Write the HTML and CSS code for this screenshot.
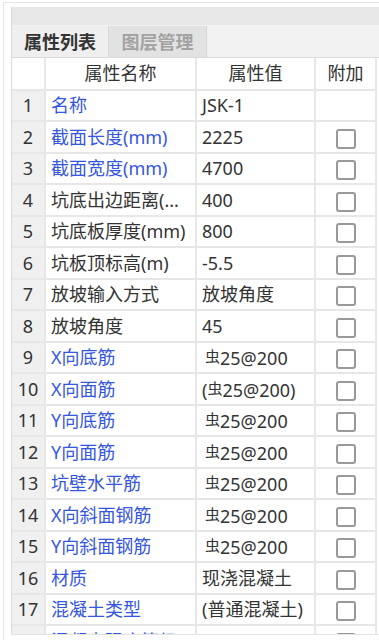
FILE: index.html
```html
<!DOCTYPE html>
<html lang="zh-CN">
<head>
    <meta charset="UTF-8">
    <meta name="viewport" content="width=device-width, initial-scale=1.0">
    <title>属性列表</title>
    <link rel="stylesheet" href="styles.css">
</head>
<body>
    <div class="window">
        <div class="panel">
            <div class="titlebar"></div>
            <div class="tabs">
                <div class="tab active">属性列表</div>
                <div class="tab">图层管理</div>
            </div>
            <table class="props">
                <colgroup>
                    <col class="c-num">
                    <col class="c-name">
                    <col class="c-val">
                    <col class="c-ext">
                </colgroup>
                <thead>
                    <tr><th></th><th>属性名称</th><th>属性值</th><th>附加</th></tr>
                </thead>
                <tbody>
                    <tr><td class="num">1</td><td class="name link">名称</td><td class="val">JSK-1</td><td class="ext"></td></tr>
                    <tr><td class="num">2</td><td class="name link">截面长度(mm)</td><td class="val">2225</td><td class="ext"><span class="cb"></span></td></tr>
                    <tr><td class="num">3</td><td class="name link">截面宽度(mm)</td><td class="val">4700</td><td class="ext"><span class="cb"></span></td></tr>
                    <tr><td class="num">4</td><td class="name">坑底出边距离(...</td><td class="val">400</td><td class="ext"><span class="cb"></span></td></tr>
                    <tr><td class="num">5</td><td class="name">坑底板厚度(mm)</td><td class="val">800</td><td class="ext"><span class="cb"></span></td></tr>
                    <tr><td class="num">6</td><td class="name">坑板顶标高(m)</td><td class="val">-5.5</td><td class="ext"><span class="cb"></span></td></tr>
                    <tr><td class="num">7</td><td class="name">放坡输入方式</td><td class="val">放坡角度</td><td class="ext"><span class="cb"></span></td></tr>
                    <tr><td class="num">8</td><td class="name">放坡角度</td><td class="val">45</td><td class="ext"><span class="cb"></span></td></tr>
                    <tr><td class="num">9</td><td class="name link">X向底筋</td><td class="val"><span class="bar pad">虫</span>25@200</td><td class="ext"><span class="cb"></span></td></tr>
                    <tr><td class="num">10</td><td class="name link">X向面筋</td><td class="val">(<span class="bar">虫</span>25@200)</td><td class="ext"><span class="cb"></span></td></tr>
                    <tr><td class="num">11</td><td class="name link">Y向底筋</td><td class="val"><span class="bar pad">虫</span>25@200</td><td class="ext"><span class="cb"></span></td></tr>
                    <tr><td class="num">12</td><td class="name link">Y向面筋</td><td class="val"><span class="bar pad">虫</span>25@200</td><td class="ext"><span class="cb"></span></td></tr>
                    <tr><td class="num">13</td><td class="name link">坑壁水平筋</td><td class="val"><span class="bar pad">虫</span>25@200</td><td class="ext"><span class="cb"></span></td></tr>
                    <tr><td class="num">14</td><td class="name link">X向斜面钢筋</td><td class="val"><span class="bar pad">虫</span>25@200</td><td class="ext"><span class="cb"></span></td></tr>
                    <tr><td class="num">15</td><td class="name link">Y向斜面钢筋</td><td class="val"><span class="bar pad">虫</span>25@200</td><td class="ext"><span class="cb"></span></td></tr>
                    <tr><td class="num">16</td><td class="name link">材质</td><td class="val">现浇混凝土</td><td class="ext"><span class="cb"></span></td></tr>
                    <tr><td class="num">17</td><td class="name link">混凝土类型</td><td class="val">(普通混凝土)</td><td class="ext"><span class="cb"></span></td></tr>
                    <tr><td class="num">18</td><td class="name link">混凝土强度等级</td><td class="val"></td><td class="ext"><span class="cb"></span></td></tr>
                </tbody>
            </table>
        </div>
    </div>
</body>
</html>
```

FILE: styles.css
```css
body {
    margin: 0;
    background-color: #fff;
    font-family: "Noto Sans", "Noto Sans CJK SC", sans-serif;
    font-size: 18px;
    color: #333;
}
.window {
    margin: 2px 0 0 3px;
    padding: 4px 0 0 7px;
    border-top: 1px solid #e4e4e4;
    border-left: 1px solid #e4e4e4;
    height: 638px;
    box-sizing: border-box;
}
.panel {
    height: 628px;
    overflow: hidden;
    border-left: 1px solid #dcdcdc;
    border-bottom: 1px solid #e4e4e4;
    box-sizing: border-box;
}
.titlebar {
    height: 18px;
    background-color: #e7e7e7;
}
.tabs {
    display: flex;
    height: 33px;
    padding-top: 1px;
    box-sizing: border-box;
    background-color: #f2f2f2;
    border-bottom: 1px solid #dadada;
}
.tab {
    width: 97px;
    line-height: 32px;
    text-align: center;
    font-weight: bold;
    color: #a3a3a3;
    background-color: #e2e2e2;
    border-right: 1px solid #d6d6d6;
}
.tab.active {
    width: 96px;
    color: #333;
    background-color: #efefef;
}
.props {
    width: 364px;
    table-layout: fixed;
    border-collapse: collapse;
}
.c-num { width: 33px; }
.c-name { width: 151px; }
.c-val { width: 119px; }
.c-ext { width: 61px; }
.props tr {
    height: 31.5px;
}
.props th,
.props td {
    border: 2px solid #e7e7e7;
    padding: 0 5px;
    white-space: nowrap;
    overflow: hidden;
    line-height: 26px;
}
.props tr > :first-child {
    border-left: none;
}
.props thead th {
    border-top: none;
    font-weight: normal;
    text-align: center;
    background-color: #fff;
}
.props .num {
    text-align: center;
    padding: 0;
    background-color: #f0f0f0;
}
.props .link {
    color: #3556e0;
}
.props .ext {
    text-align: center;
    padding: 0;
}
.cb {
    display: inline-block;
    width: 20px;
    height: 20px;
    box-sizing: border-box;
    border: 2px solid #999;
    border-radius: 3px;
    background-color: #fff;
    vertical-align: middle;
}
.bar {
    font-size: 15px;
    vertical-align: 3px;
}
.bar.pad {
    margin-left: 3px;
}
```
